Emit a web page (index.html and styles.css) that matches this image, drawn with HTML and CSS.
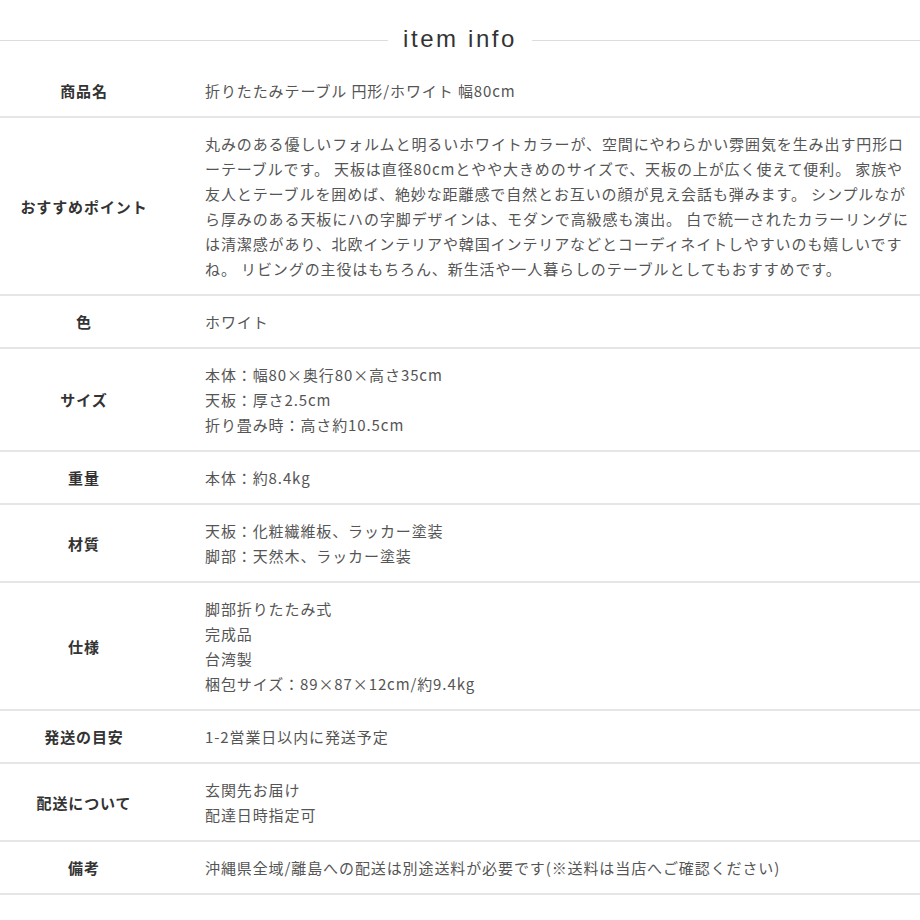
FILE: index.html
```html
<!DOCTYPE html>
<html lang="ja">
    <head>
        <meta charset="UTF-8" />
        <meta name="viewport" content="width=device-width, initial-scale=1.0" />
        <title>item info</title>
        <link rel="stylesheet" href="styles.css">
    </head>
    <body>
        <div class="item-info">
            <h2 class="heading"><span>item info</span></h2>
            <table class="spec">
                <tr>
                    <th>商品名</th>
                    <td>折りたたみテーブル 円形/ホワイト 幅80cm</td>
                </tr>
                <tr>
                    <th>おすすめポイント</th>
                    <td>丸みのある優しいフォルムと明るいホワイトカラーが、空間にやわらかい雰囲気を生み出す円形ローテーブルです。 天板は直径80cmとやや大きめのサイズで、天板の上が広く使えて便利。 家族や友人とテーブルを囲めば、絶妙な距離感で自然とお互いの顔が見え会話も弾みます。 シンプルながら厚みのある天板にハの字脚デザインは、モダンで高級感も演出。 白で統一されたカラーリングには清潔感があり、北欧インテリアや韓国インテリアなどとコーディネイトしやすいのも嬉しいですね。 リビングの主役はもちろん、新生活や一人暮らしのテーブルとしてもおすすめです。</td>
                </tr>
                <tr>
                    <th>色</th>
                    <td>ホワイト</td>
                </tr>
                <tr>
                    <th>サイズ</th>
                    <td>本体：幅80×奥行80×高さ35cm<br>天板：厚さ2.5cm<br>折り畳み時：高さ約10.5cm</td>
                </tr>
                <tr>
                    <th>重量</th>
                    <td>本体：約8.4kg</td>
                </tr>
                <tr>
                    <th>材質</th>
                    <td>天板：化粧繊維板、ラッカー塗装<br>脚部：天然木、ラッカー塗装</td>
                </tr>
                <tr>
                    <th>仕様</th>
                    <td>脚部折りたたみ式<br>完成品<br>台湾製<br>梱包サイズ：89×87×12cm/約9.4kg</td>
                </tr>
                <tr>
                    <th>発送の目安</th>
                    <td>1-2営業日以内に発送予定</td>
                </tr>
                <tr>
                    <th>配送について</th>
                    <td>玄関先お届け<br>配達日時指定可</td>
                </tr>
                <tr>
                    <th>備考</th>
                    <td>沖縄県全域/離島への配送は別途送料が必要です(※送料は当店へご確認ください)</td>
                </tr>
            </table>
        </div>
    </body>
</html>
```

FILE: styles.css
```css
* {
    margin: 0;
    padding: 0;
    box-sizing: border-box;
}

body {
    background: #fff;
    font-family: "Noto Sans CJK JP", "Noto Sans", sans-serif;
    color: #555;
}

.item-info {
    width: 920px;
}

.heading {
    height: 65px;
    display: flex;
    align-items: center;
    gap: 15px;
    padding-top: 13px;
    font-family: "Liberation Sans", sans-serif;
    font-weight: normal;
    font-size: 24px;
    letter-spacing: 2.6px;
    color: #333;
}

.heading::before,
.heading::after {
    content: "";
    flex: 1;
    height: 1px;
    margin-top: 3px;
    background: #ddd;
}

.spec {
    width: 100%;
    border-collapse: collapse;
}

.spec tr {
    border-bottom: 2px solid #e6e6e6;
}

.spec th,
.spec td {
    padding: 13px 0 13px;
    font-size: 15px;
    line-height: 25px;
    letter-spacing: 0.9px;
    vertical-align: middle;
}

.spec th {
    width: 168px;
    text-align: center;
    font-weight: bold;
    color: #333;
}

.spec td {
    padding-left: 37px;
    padding-right: 10px;
    text-align: left;
}
```
